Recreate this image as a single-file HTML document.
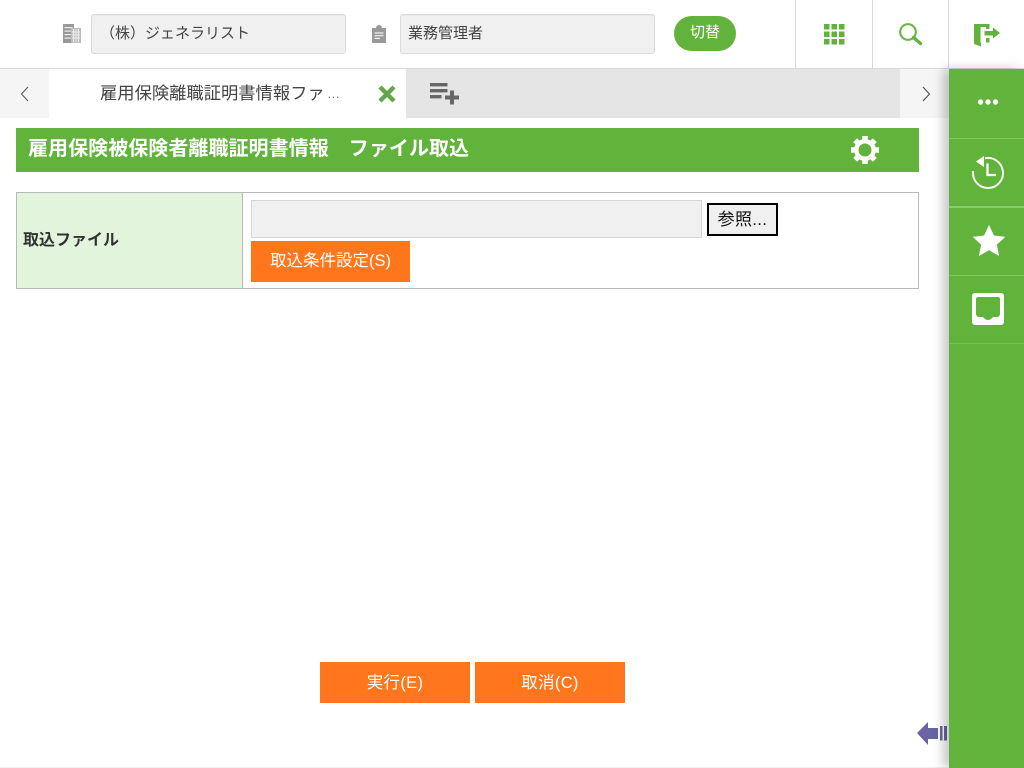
<!DOCTYPE html>
<html lang="ja">
<head>
<meta charset="utf-8">
<style>
html,body{margin:0;padding:0;width:1024px;height:768px;overflow:hidden;background:#fff;}
body{font-family:"Liberation Sans","Noto Sans CJK JP",sans-serif;font-size:15px;color:#333;position:relative;}
.a{position:absolute;box-sizing:border-box;}
.t{position:absolute;white-space:nowrap;line-height:20px;}
.inp{background:#f0f0f0;border:1px solid #dcdcdc;border-radius:3px;box-shadow:inset 0 1px 1px rgba(0,0,0,.04);}
.btn{background:#ff761c;color:#fff;text-align:center;white-space:nowrap;}
svg{position:absolute;display:block;}
</style>
</head>
<body>
<!-- header -->
<div class="a" style="left:0;top:0;width:1024px;height:69px;background:#fff;border-bottom:1px solid #d9d9d9"></div>
<svg style="left:62px;top:24px" width="20" height="20" viewBox="0 0 20 20">
<rect x="1" y="0" width="11" height="19" fill="#999"/>
<rect x="2.500" y="3" width="8" height="1.200" fill="#eee"/><rect x="2.500" y="6.500" width="8" height="1.200" fill="#eee"/><rect x="2.500" y="10" width="8" height="1.200" fill="#eee"/><rect x="2.500" y="13.500" width="8" height="1.200" fill="#eee"/>
<rect x="9" y="4" width="10" height="15" fill="#bdbdbd"/>
<path d="M11.500 5v13M14 5v13M16.500 5v13M10 8h8M10 11h8M10 14h8" stroke="#eee" stroke-width="1"/>
</svg>
<div class="a inp" style="left:91px;top:14px;width:255px;height:40px"></div>
<div class="t" style="left:100px;top:24px;color:#444">（株）ジェネラリスト</div>
<svg style="left:371px;top:25px" width="16" height="18" viewBox="0 0 16 18">
<path d="M1 3h4a3 3 0 0 1 6 0h4v15H1z" fill="#999"/>
<path d="M3.500 8h9M3.500 10.700h9M3.500 13.400h5.500" stroke="#eee" stroke-width="1.200"/>
</svg>
<div class="a inp" style="left:400px;top:14px;width:255px;height:40px"></div>
<div class="t" style="left:408px;top:24px;color:#444;font-size:15px">業務管理者</div>
<div class="a" style="left:674px;top:16px;width:62px;height:35px;border-radius:18px;background:#62b33c;color:#fff;text-align:center;line-height:33px;font-size:15px">切替</div>
<div class="a" style="left:795px;top:0;width:1px;height:68px;background:#d9d9d9"></div>
<div class="a" style="left:872px;top:0;width:1px;height:68px;background:#d9d9d9"></div>
<div class="a" style="left:948px;top:0;width:1px;height:68px;background:#d9d9d9"></div>
<svg style="left:824px;top:24px" width="21" height="21" viewBox="0 0 21 21" fill="#62b33c">
<rect x="0" y="0" width="5.500" height="5.500"/><rect x="7.500" y="0" width="5.500" height="5.500"/><rect x="15" y="0" width="5.500" height="5.500"/>
<rect x="0" y="7.500" width="5.500" height="5.500"/><rect x="7.500" y="7.500" width="5.500" height="5.500"/><rect x="15" y="7.500" width="5.500" height="5.500"/>
<rect x="0" y="15" width="5.500" height="5.500"/><rect x="7.500" y="15" width="5.500" height="5.500"/><rect x="15" y="15" width="5.500" height="5.500"/>
</svg>
<svg style="left:898px;top:22px" width="25" height="24" viewBox="0 0 25 24">
<circle cx="10" cy="10" r="7.800" fill="none" stroke="#6cb84c" stroke-width="2.200"/>
<path d="M15.500 15.500L22.500 21.500" stroke="#62b33c" stroke-width="3.400" stroke-linecap="round"/>
</svg>
<svg style="left:974px;top:24px" width="27" height="23" viewBox="0 0 27 23" fill="#62b33c">
<path d="M0 0H15.500V5H12V3H6.500V18.500H12V14H15.500V18.500H7V22.500L0 20Z"/>
<path d="M10.500 7H19V3.500L26 9l-7 5.500V11.500H10.500z"/>
</svg>
<!-- tab bar -->
<div class="a" style="left:0;top:69px;width:49px;height:49px;background:#f5f5f5"></div>
<div class="a" style="left:406px;top:69px;width:494px;height:49px;background:#e5e5e5"></div>
<div class="a" style="left:900px;top:69px;width:49px;height:49px;background:#f5f5f5"></div>
<svg style="left:20px;top:86px" width="10" height="16" viewBox="0 0 10 16"><path d="M8 1L1.500 8 8 15" fill="none" stroke="#555" stroke-width="1"/></svg>
<svg style="left:921px;top:86px" width="10" height="16" viewBox="0 0 10 16"><path d="M2 1l6.500 7L2 15" fill="none" stroke="#444" stroke-width="1"/></svg>
<div class="t" style="left:100px;top:83px;color:#444;font-size:17.300px">雇用保険離職証明書情報ファ</div>
<div class="t" style="left:327px;top:84px;color:#777;font-size:13px">…</div>
<svg style="left:378px;top:85px" width="18" height="18" viewBox="0 0 18 18"><path d="M2 2l14 14M16 2L2 16" stroke="#62a84a" stroke-width="4.400"/></svg>
<svg style="left:430px;top:82px" width="30" height="23" viewBox="0 0 30 23" fill="#666">
<rect x="0" y="1" width="17.500" height="3.400"/><rect x="0" y="7" width="17.500" height="3.400"/><rect x="0" y="13" width="11.500" height="3.400"/>
<rect x="15" y="13.500" width="14" height="4"/><rect x="20" y="8.500" width="4" height="14"/>
</svg>
<!-- title -->
<div class="a" style="left:16px;top:128px;width:903px;height:44px;background:#62b33c"></div>
<div class="t" style="left:28px;top:139px;color:#fff;font-weight:bold;font-size:20px;letter-spacing:.05px">雇用保険被保険者離職証明書情報　ファイル取込</div>
<svg style="left:851px;top:136px" width="28" height="28" viewBox="0 0 28 28">
<circle cx="14" cy="14" r="8.700" fill="none" stroke="#fff" stroke-width="4.400"/>
<g stroke="#fff" stroke-width="5.600"><path d="M14 0v5M14 23v5M0 14h5M23 14h5M4.200 4.200l3.500 3.500M20.300 20.300l3.500 3.500M23.800 4.200l-3.500 3.500M7.700 20.300l-3.500 3.500"/></g>
</svg>
<!-- table -->
<div class="a" style="left:16px;top:192px;width:903px;height:97px;border:1px solid #b9b9b9"></div>
<div class="a" style="left:17px;top:193px;width:226px;height:95px;background:#e2f4dc;border-right:1px solid #b9b9b9"></div>
<div class="t" style="left:23px;top:231px;font-weight:bold;font-size:16px;color:#333">取込ファイル</div>
<div class="a" style="left:251px;top:200px;width:451px;height:38px;background:#f0f0f0;border:1px solid #d6d6d6"></div>
<div class="a" style="left:707px;top:203px;width:71px;height:33px;background:#f0f0f0;border:2px solid #000;color:#111;font-size:17px;letter-spacing:.3px;line-height:29px;text-align:center;white-space:nowrap">参照...</div>
<div class="a btn" style="left:251px;top:241px;width:159px;height:41px;line-height:41px;font-size:16.500px">取込条件設定(S)</div>
<!-- bottom buttons -->
<div class="a btn" style="left:320px;top:662px;width:150px;height:41px;line-height:42px;font-size:16.500px;letter-spacing:.3px">実行(E)</div>
<div class="a btn" style="left:475px;top:662px;width:150px;height:41px;line-height:42px;font-size:16.500px;letter-spacing:.3px">取消(C)</div>
<div class="a" style="left:0;top:767px;width:949px;height:1px;background:#f0f0f0"></div>
<!-- arrow -->
<svg style="left:917px;top:721px" width="31" height="25" viewBox="0 0 31 25" fill="#6a64a4">
<path d="M0 12L11 1v6h10v11H11v6z"/>
<rect x="23" y="5" width="2.500" height="14.500"/><rect x="27" y="5" width="3" height="14.500"/>
</svg>
<!-- sidebar -->
<div class="a" style="left:949px;top:69px;width:75px;height:699px;background:#62b33c;box-shadow:-6px 0 10px rgba(0,0,0,.22)"></div>
<div class="a" style="left:949px;top:138px;width:75px;height:1px;background:#85c366"></div>
<div class="a" style="left:949px;top:206px;width:75px;height:2px;background:#8ec872"></div>
<div class="a" style="left:949px;top:275px;width:75px;height:1px;background:#85c366"></div>
<div class="a" style="left:949px;top:343px;width:75px;height:1px;background:#7abd5a"></div>
<svg style="left:977px;top:98px" width="22" height="8" viewBox="0 0 22 8" fill="#fff"><circle cx="3.500" cy="4" r="2.700"/><circle cx="11" cy="4" r="2.700"/><circle cx="18.500" cy="4" r="2.700"/></svg>
<svg style="left:971px;top:155px" width="34" height="36" viewBox="0 0 34 36">
<path d="M14 3.300A15 15 0 1 1 2 18v-2" fill="none" stroke="#fff" stroke-width="1.900"/>
<path d="M5 6.500L13 1v11z" fill="#fff"/>
<path d="M16.500 8.500v11.500h8.500" fill="none" stroke="#fff" stroke-width="2.300"/>
</svg>
<svg style="left:973px;top:225px" width="32" height="31" viewBox="0 0 32 31"><path d="M16 .5l4.700 10.300 11 1.200-8.200 7.500 2.300 11L16 24.900 6.200 30.500l2.300-11L.3 12l11-1.200z" fill="#fff" stroke="#fff" stroke-width=".6" stroke-linejoin="round"/></svg>
<svg style="left:972px;top:293px" width="32" height="33" viewBox="0 0 32 33">
<rect x="0" y="0" width="32" height="32" rx="3" fill="#fff"/>
<path d="M4 6a2 2 0 0 1 2-2h20a2 2 0 0 1 2 2v15a3 3 0 0 1-3 3h-3.500c-1.500 0-2 3-5.500 3s-4-3-5.500-3H7a3 3 0 0 1-3-3z" fill="#62b33c"/>
</svg>
</body>
</html>
